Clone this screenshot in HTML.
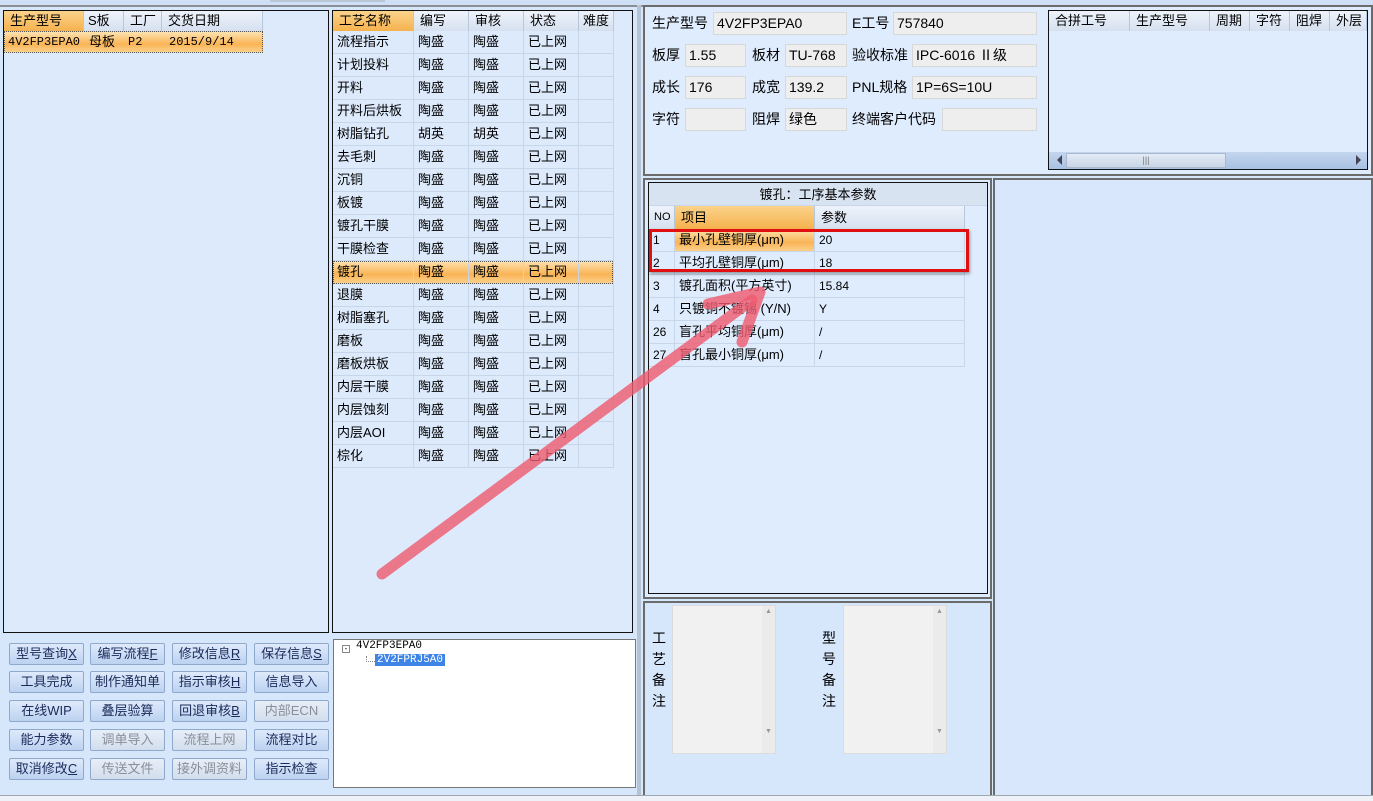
<!DOCTYPE html>
<html><head><meta charset="utf-8"><style>
*{box-sizing:border-box;margin:0;padding:0}
body{width:1373px;height:801px;background:#d6e6fb;font-family:"Liberation Sans","Noto Sans CJK SC",sans-serif;font-size:13px;color:#000;position:relative;overflow:hidden}
.a{position:absolute}
.pan{position:absolute;border:2px solid #6b6b6b;background:#dfecfd}
.blk{position:absolute;border:1px solid #111;background:#ddeafc}
.hd{position:absolute;height:20px;background:linear-gradient(#eef3fb,#d5e0ef);border-right:1px solid #b8c6da;line-height:20px;padding-left:6px}
.hd.o{background:linear-gradient(#fbd38a,#f5b24e)}
.c{position:absolute;height:23px;line-height:22px;padding-left:4px;border-right:1px solid #c8d6ea;border-bottom:1px solid #c8d6ea;white-space:nowrap}
.sel{background:linear-gradient(#fde3b0,#f9b456 60%,#fbd08a)}
.btn{position:absolute;width:75px;height:22px;border:1px solid #8fa9cc;border-radius:2px;background:linear-gradient(#dfeafb,#bcd2f0);color:#1a2a5a;text-align:center;line-height:20px;font-size:13px}
.btn.d{color:#8a8f99;background:linear-gradient(#e7eef8,#d3deed)}
.inp{position:absolute;height:23px;background:#eeeeee;border:1px solid #d8d8d8;line-height:21px;padding-left:3px;font-size:14px}
.lb{position:absolute;font-size:14px;line-height:23px}
</style></head><body>
<div class="a" style="left:0;top:0;width:1373px;height:5px;background:#cfe0f6"></div>
<div class="a" style="left:270px;top:0;width:115px;height:2px;background:#b9c6d6"></div>
<div class="a" style="left:0;top:5px;width:1373px;height:2px;background:#8a8f96"></div>

<!-- left list -->
<div class="blk" style="left:3px;top:10px;width:326px;height:623px;border-width:1px"></div>
<div class="hd o" style="left:4px;top:11px;width:80px">生产型号</div>
<div class="hd" style="left:84px;top:11px;width:40px;padding-left:4px">S板</div>
<div class="hd" style="left:124px;top:11px;width:38px">工厂</div>
<div class="hd" style="left:162px;top:11px;width:101px">交货日期</div>
<div class="a sel" style="left:4px;top:31px;width:259px;height:22px;border:1px dotted #555;line-height:21px;font-size:12px;font-family:'Liberation Mono','Noto Sans CJK SC',monospace"><span class="a" style="left:3px">4V2FP3EPA0</span><span class="a" style="left:84px;font-size:13px">母板</span><span class="a" style="left:123px">P2</span><span class="a" style="left:164px">2015/9/14</span></div>

<!-- process list -->
<div class="blk" style="left:332px;top:10px;width:301px;height:623px"></div>
<div class="hd o" style="left:333px;top:11px;width:81px">工艺名称</div>
<div class="hd" style="left:414px;top:11px;width:55px">编写</div>
<div class="hd" style="left:469px;top:11px;width:55px">审核</div>
<div class="hd" style="left:524px;top:11px;width:55px">状态</div>
<div class="hd" style="left:579px;top:11px;width:35px;padding-left:4px">难度</div>
<div id="rows"></div>

<!-- buttons -->
<div class="btn" style="left:9px;top:643px">型号查询<u>X</u></div>
<div class="btn" style="left:90px;top:643px">编写流程<u>F</u></div>
<div class="btn" style="left:172px;top:643px">修改信息<u>R</u></div>
<div class="btn" style="left:254px;top:643px">保存信息<u>S</u></div>
<div class="btn" style="left:9px;top:671px">工具完成</div>
<div class="btn" style="left:90px;top:671px">制作通知单</div>
<div class="btn" style="left:172px;top:671px">指示审核<u>H</u></div>
<div class="btn" style="left:254px;top:671px">信息导入</div>
<div class="btn" style="left:9px;top:700px">在线WIP</div>
<div class="btn" style="left:90px;top:700px">叠层验算</div>
<div class="btn" style="left:172px;top:700px">回退审核<u>B</u></div>
<div class="btn d" style="left:254px;top:700px">内部ECN</div>
<div class="btn" style="left:9px;top:729px">能力参数</div>
<div class="btn d" style="left:90px;top:729px">调单导入</div>
<div class="btn d" style="left:172px;top:729px">流程上网</div>
<div class="btn" style="left:254px;top:729px">流程对比</div>
<div class="btn" style="left:9px;top:758px">取消修改<u>C</u></div>
<div class="btn d" style="left:90px;top:758px">传送文件</div>
<div class="btn d" style="left:172px;top:758px">接外调资料</div>
<div class="btn" style="left:254px;top:758px">指示检查</div>

<!-- tree -->
<div class="a" style="left:333px;top:639px;width:303px;height:149px;background:#fff;border:1px solid #777"></div>
<div class="a" style="left:342px;top:645px;width:8px;height:8px;border:1px solid #888;font-size:8px;line-height:6px;text-align:center">-</div>
<div class="a" style="left:356px;top:640px;font-size:11px;font-family:'Liberation Mono',monospace">4V2FP3EPA0</div>
<div class="a" style="left:366px;top:656px;width:9px;height:6px;border-left:1px dotted #888;border-bottom:1px dotted #888"></div>
<div class="a" style="left:375px;top:654px;background:#3d84e6;color:#fff;font-size:11px;padding:0 2px;font-family:'Liberation Mono',monospace">2V2FPRJ5A0</div>
<div class="a" style="left:637px;top:5px;width:4px;height:792px;background:#b5c3d4"></div>

<!-- info panel -->
<div class="pan" style="left:643px;top:5px;width:730px;height:171px"></div>
<div class="lb" style="left:652px;top:12px">生产型号</div><div class="inp" style="left:713px;top:12px;width:134px">4V2FP3EPA0</div>
<div class="lb" style="left:852px;top:12px">E工号</div><div class="inp" style="left:893px;top:12px;width:144px">757840</div>
<div class="lb" style="left:652px;top:44px">板厚</div><div class="inp" style="left:685px;top:44px;width:61px">1.55</div>
<div class="lb" style="left:752px;top:44px">板材</div><div class="inp" style="left:785px;top:44px;width:62px">TU-768</div>
<div class="lb" style="left:852px;top:44px">验收标准</div><div class="inp" style="left:912px;top:44px;width:125px">IPC-6016 Ⅱ级</div>
<div class="lb" style="left:652px;top:76px">成长</div><div class="inp" style="left:685px;top:76px;width:61px">176</div>
<div class="lb" style="left:752px;top:76px">成宽</div><div class="inp" style="left:785px;top:76px;width:62px">139.2</div>
<div class="lb" style="left:852px;top:76px">PNL规格</div><div class="inp" style="left:912px;top:76px;width:125px">1P=6S=10U</div>
<div class="lb" style="left:652px;top:108px">字符</div><div class="inp" style="left:685px;top:108px;width:61px"></div>
<div class="lb" style="left:752px;top:108px">阻焊</div><div class="inp" style="left:785px;top:108px;width:62px">绿色</div>
<div class="lb" style="left:852px;top:108px">终端客户代码</div><div class="inp" style="left:942px;top:108px;width:95px"></div>
<div class="blk" style="left:1048px;top:10px;width:320px;height:160px;background:#dfecfd"></div>
<div class="hd" style="left:1049px;top:11px;width:81px">合拼工号</div>
<div class="hd" style="left:1130px;top:11px;width:80px">生产型号</div>
<div class="hd" style="left:1210px;top:11px;width:40px">周期</div>
<div class="hd" style="left:1250px;top:11px;width:40px">字符</div>
<div class="hd" style="left:1290px;top:11px;width:40px">阻焊</div>
<div class="hd" style="left:1330px;top:11px;width:37px">外层</div>
<div class="a" style="left:1049px;top:152px;width:318px;height:17px;background:linear-gradient(#c4d6ee,#a8c1e3)"></div>
<div class="a" style="left:1066px;top:153px;width:160px;height:15px;background:linear-gradient(#e3ecf6,#c9d6e6);border:1px solid #a9b8cc;text-align:center;font-size:9px;line-height:13px;color:#777">|||</div>
<div class="a" style="left:1052px;top:155px;width:0;height:0;border:5px solid transparent;border-right-color:#445"></div>
<div class="a" style="left:1356px;top:155px;width:0;height:0;border:5px solid transparent;border-left-color:#445"></div>

<!-- params -->
<div class="pan" style="left:643px;top:178px;width:349px;height:421px"></div>
<div class="blk" style="left:648px;top:182px;width:340px;height:412px;background:#dfecfd"></div>
<div class="a" style="left:649px;top:183px;width:338px;height:23px;background:#d8e3f1;text-align:center;line-height:23px;border-bottom:1px solid #c8d6ea">镀孔：工序基本参数</div>
<div class="hd" style="left:649px;top:206px;width:26px;padding-left:5px;font-size:11px;height:23px;line-height:23px">NO</div>
<div class="hd o" style="left:675px;top:206px;width:140px;height:23px;line-height:23px">项目</div>
<div class="hd" style="left:815px;top:206px;width:150px;height:23px;line-height:23px">参数</div>
<div id="prow"></div>
<div class="a" style="left:649px;top:229px;width:320px;height:43px;border:3px solid #e01010;box-shadow:1px 2px 3px rgba(0,0,0,.35)"></div>

<!-- remarks -->
<div class="pan" style="left:643px;top:601px;width:349px;height:196px;background:#d6e6fb"></div>
<div class="a" style="left:652px;top:628px;width:14px;font-size:14px;line-height:21px">工<br>艺<br>备<br>注</div>
<div class="a" style="left:672px;top:605px;width:104px;height:149px;background:#f1f1f1;border:1px solid #dcdcdc"></div>
<div class="a" style="left:762px;top:606px;width:13px;height:147px;background:#ebebeb;font-size:7px;color:#999;text-align:center;line-height:12px">▲<br><br><br><br><br><br><br><br><br><br>▼</div>
<div class="a" style="left:822px;top:628px;width:14px;font-size:14px;line-height:21px">型<br>号<br>备<br>注</div>
<div class="a" style="left:843px;top:605px;width:104px;height:149px;background:#f1f1f1;border:1px solid #dcdcdc"></div>
<div class="a" style="left:933px;top:606px;width:13px;height:147px;background:#ebebeb;font-size:7px;color:#999;text-align:center;line-height:12px">▲<br><br><br><br><br><br><br><br><br><br>▼</div>
<div class="pan" style="left:993px;top:178px;width:380px;height:619px;background:#d8e7fc"></div>
<div class="a" style="left:0;top:795px;width:1373px;height:6px;background:#eef2f8;border-top:1px solid #a0a8b4"></div>

<svg class="a" style="left:0;top:0" width="1373" height="801"><g stroke="#ef5a6e" stroke-opacity=".8" stroke-width="11" stroke-linecap="round" fill="none"><line x1="382" y1="574" x2="752" y2="300"/><polyline points="708,304 760,292 742,342" stroke-linejoin="round"/></g></svg>

<script>
var n=[["流程指示","陶盛","陶盛"],["计划投料","陶盛","陶盛"],["开料","陶盛","陶盛"],["开料后烘板","陶盛","陶盛"],["树脂钻孔","胡英","胡英"],["去毛刺","陶盛","陶盛"],["沉铜","陶盛","陶盛"],["板镀","陶盛","陶盛"],["镀孔干膜","陶盛","陶盛"],["干膜检查","陶盛","陶盛"],["镀孔","陶盛","陶盛"],["退膜","陶盛","陶盛"],["树脂塞孔","陶盛","陶盛"],["磨板","陶盛","陶盛"],["磨板烘板","陶盛","陶盛"],["内层干膜","陶盛","陶盛"],["内层蚀刻","陶盛","陶盛"],["内层AOI","陶盛","陶盛"],["棕化","陶盛","陶盛"]];
var h="";n.forEach(function(r,i){var y=31+i*23;var s=i==10?" sel":"";
var xs=[333,414,469,524,579],ws=[81,55,55,55,35],v=[r[0],r[1],r[2],"已上网",""];
for(var k=0;k<5;k++)h+='<div class="c'+s+'" style="left:'+xs[k]+'px;top:'+y+'px;width:'+ws[k]+'px">'+v[k]+'</div>';});
h+='<div class="a" style="left:333px;top:261px;width:280px;height:23px;border:1px dotted #555"></div>';
document.getElementById("rows").innerHTML=h;
var p=[["1","最小孔壁铜厚(μm)","20"],["2","平均孔壁铜厚(μm)","18"],["3","镀孔面积(平方英寸)","15.84"],["4","只镀铜不镀锡 (Y/N)","Y"],["26","盲孔平均铜厚(μm)","/"],["27","盲孔最小铜厚(μm)","/"]];
h="";p.forEach(function(r,i){var y=229+i*23;
h+='<div class="c" style="left:649px;top:'+y+'px;width:26px;font-size:12px">'+r[0]+'</div>';
h+='<div class="c'+(i==0?' sel':'')+'" style="left:675px;top:'+y+'px;width:140px">'+r[1]+'</div>';
h+='<div class="c" style="left:815px;top:'+y+'px;width:150px;font-size:12px">'+r[2]+'</div>';});
document.getElementById("prow").innerHTML=h;
</script>
</body></html>
